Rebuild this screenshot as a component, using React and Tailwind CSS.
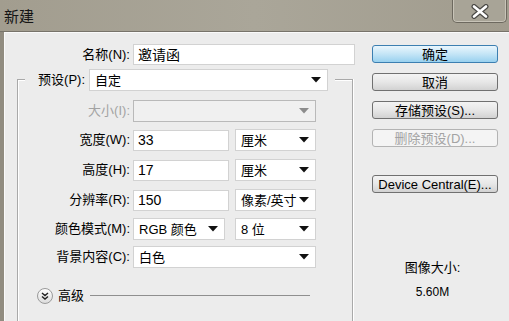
import React from "react";

const FONT = "font-['Liberation_Sans','Noto_Sans_CJK_SC',sans-serif]";

function Arrow({ disabled }) {
  return (
    <svg width="10" height="6" viewBox="0 0 10 6" className="shrink-0">
      <path d="M0 0h10L5 5.5z" fill={disabled ? "#8c8c8c" : "#111"} />
    </svg>
  );
}

function Select({ value, className = "", disabled }) {
  return (
    <div
      className={`flex h-[22px] items-center justify-between border pr-[6px] ${
        disabled ? "border-[#b9b9b9] bg-[#f0f0f0]" : "border-[#d2d2d2] bg-white"
      } ${className}`}
    >
      <span className="whitespace-nowrap pl-[5px] text-[13px] leading-none text-black">{value}</span>
      <Arrow disabled={disabled} />
    </div>
  );
}

function Input({ value, className = "" }) {
  return (
    <div className={`flex h-[21px] items-center border border-[#d2d2d2] bg-white pl-[4px] text-[14px] leading-none text-black ${className}`}>
      {value}
    </div>
  );
}

function Row({ label, disabled, children, className = "" }) {
  return (
    <div className={`flex h-[22px] items-center ${className}`}>
      <span className={`w-[112px] whitespace-nowrap text-right text-[13px] ${disabled ? "text-[#a3a3a3]" : "text-black"}`}>
        {label}
      </span>
      <div className="ml-[3px] flex items-center gap-[6px]">{children}</div>
    </div>
  );
}

function Button({ children, primary, disabled, className = "" }) {
  let look = "border-[#707070] bg-gradient-to-b from-[#f3f3f3] via-[#e7e7e7] to-[#d2d2d2] text-black";
  if (primary) look = "border-[#3c7fb1] bg-gradient-to-b from-[#eaf6fd] via-[#c4e5f6] to-[#98d1ef] text-black";
  if (disabled) look = "border-[#b3b3b3] bg-[#f4f4f4] text-[#a3a3a3]";
  return (
    <div className={`flex h-[18px] w-[126px] items-center justify-center whitespace-nowrap rounded-[3px] border text-[13px] leading-none ${look} ${className}`}>
      {children}
    </div>
  );
}

export default function App() {
  return (
    <div className={`flex h-[321px] w-[509px] flex-col overflow-hidden bg-[#918c80] ${FONT}`}>
      {/* title bar */}
      <div className="flex h-[32px] shrink-0 items-start justify-between border-b border-[#77736a] bg-gradient-to-r from-[#a29d8f] via-[#aaa699] to-[#a19c8e]">
        <span className="ml-[4px] mt-[7px] text-[15px] leading-[20px] text-[#161616]">新建</span>
        <div className="mr-[2px] flex h-[23px] w-[55px] items-center justify-center rounded-b-[5px] border border-t-0 border-[#6d695f] bg-[#a8a497] shadow-[inset_1px_0_0_#c8c4b8,inset_-1px_0_0_#c8c4b8,inset_0_-1px_0_#c8c4b8]">
          <svg width="18" height="15" viewBox="0 0 18 15">
            <path d="M3 2.5L15 12.5M15 2.5L3 12.5" stroke="#4b4a46" strokeWidth="5" strokeLinecap="round" />
            <path d="M3 2.5L15 12.5M15 2.5L3 12.5" stroke="#ffffff" strokeWidth="2.6" strokeLinecap="round" />
          </svg>
        </div>
      </div>

      {/* client */}
      <div className="ml-[4px] flex flex-1 border-l border-t border-[#fafafa] bg-[#ececec]">
        {/* left column */}
        <div className="flex w-[351px] shrink-0 flex-col">
          <div className="mt-[11px] flex h-[21px] items-center">
            <span className="w-[125px] text-right text-[13px] text-black">名称(N):</span>
            <Input value="邀请函" className="ml-[3px] w-[222px]" />
          </div>

          {/* group box */}
          <div className="ml-[12px] mt-[14px] h-[260px] w-[336px] border-l border-r border-t border-[#a9a9a9] shadow-[inset_1px_1px_0_#ffffff,1px_0_0_#ffffff]">
            <div className="-mt-[11px] ml-[7px] flex h-[22px] w-[310px] items-center bg-[#ececec]">
              <span className="w-[60px] text-right text-[13px] text-black">预设(P):</span>
              <Select value="自定" className="ml-[4px] w-[239px]" />
            </div>

            <Row label="大小(I):" disabled className="mt-[9px]">
              <Select value="" disabled className="w-[183px]" />
            </Row>
            <Row label="宽度(W):" className="mt-[7px]">
              <Input value="33" className="w-[96px]" />
              <Select value="厘米" className="w-[81px]" />
            </Row>
            <Row label="高度(H):" className="mt-[8px]">
              <Input value="17" className="w-[96px]" />
              <Select value="厘米" className="w-[81px]" />
            </Row>
            <Row label="分辨率(R):" className="mt-[8px]">
              <Input value="150" className="w-[96px]" />
              <Select value="像素/英寸" className="w-[81px]" />
            </Row>
            <Row label="颜色模式(M):" className="mt-[7px]">
              <Select value="RGB 颜色" className="w-[92px]" />
              <Select value="8 位" className="ml-[4px] w-[81px]" />
            </Row>
            <Row label="背景内容(C):" className="mt-[6px]">
              <Select value="白色" className="w-[183px]" />
            </Row>

            <div className="ml-[19px] mt-[20px] flex h-[16px] items-center">
              <div className="flex h-[16px] w-[16px] items-center justify-center rounded-full border border-[#9a9a9a] bg-gradient-to-b from-white to-[#dcdcdc]">
                <svg width="8" height="8" viewBox="0 0 8 8">
                  <path d="M1 1l3 2.5L7 1M1 4.5L4 7l3-2.5" fill="none" stroke="#222" strokeWidth="1.4" />
                </svg>
              </div>
              <span className="ml-[5px] text-[13px] text-black">高级</span>
              <div className="-mt-[2px] ml-[6px] h-px w-[220px] bg-[#8f8f8f]" />
            </div>
          </div>
        </div>

        {/* right column */}
        <div className="flex flex-1 flex-col">
          <Button primary className="ml-[16px] mt-[12px]">确定</Button>
          <Button className="ml-[16px] mt-[10px]">取消</Button>
          <Button className="ml-[16px] mt-[10px]">存储预设(S)...</Button>
          <Button disabled className="ml-[16px] mt-[10px]">删除预设(D)...</Button>
          <Button className="ml-[16px] mt-[28px]">Device Central(E)...</Button>

          <div className="mt-[68px] text-center text-[13px] leading-[14px] text-black">图像大小:</div>
          <div className="mt-[10px] text-center text-[12px] leading-[14px] text-black">5.60M</div>
        </div>
      </div>
    </div>
  );
}
